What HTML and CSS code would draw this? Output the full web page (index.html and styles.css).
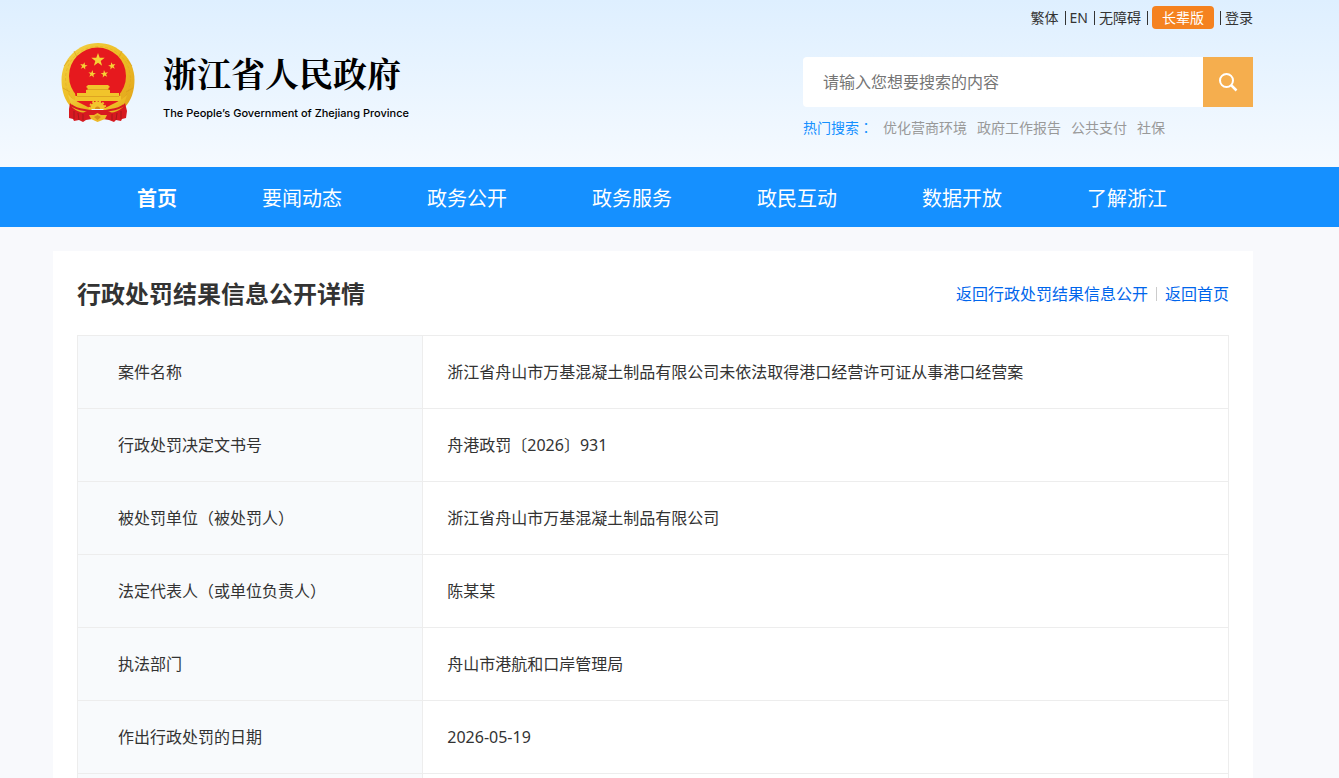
FILE: index.html
```html
<!DOCTYPE html>
<html lang="zh-CN">
<head>
<meta charset="utf-8">
<meta name="viewport" content="width=device-width, initial-scale=1">
<title>行政处罚结果信息公开详情</title>
<link rel="stylesheet" href="styles.css">
</head>
<body>
<header class="header">
  <div class="wrap">
    <div class="topbar">
      <a href="#">繁体</a><span class="bar"></span><a href="#">EN</a><span class="bar"></span><a href="#">无障碍</a><span class="bar"></span><a class="elder" href="#">长辈版</a><span class="bar"></span><a href="#">登录</a>
    </div>
    <div class="masthead">
      <a class="brand" href="#">
        <svg class="emblem" viewBox="0 0 74 80" aria-hidden="true">
          <defs>
            <linearGradient id="gold" x1="0" y1="0" x2="1" y2="1"><stop offset="0" stop-color="#f3d34a"/><stop offset=".5" stop-color="#edbd25"/><stop offset="1" stop-color="#e2a51c"/></linearGradient>
            <path id="star" d="M0-7 1.700-2.200 6.700-2.200 2.700.9 4.100 5.700 0 2.800-4.100 5.700-2.700.9-6.700-2.200-1.700-2.200Z"/>
          </defs>
          <path d="M37 0C57 0 73.500 16 73.500 37 73.500 48 70 58 64 64L10 64C4 58 .5 48 .5 37 .5 16 17 0 37 0Z" fill="url(#gold)"/>
          <circle cx="37" cy="36" r="32.500" fill="none" stroke="#d79a1c" stroke-width="1" stroke-dasharray="3 2" opacity=".35"/>
          <path d="M8 17 3 23M66 17 71 23M2 45 9 49M72 45 65 49M13 8 16 14M61 8 58 14" stroke="#d6991a" stroke-width="1" opacity=".6"/>
          <circle cx="36.500" cy="33" r="28.500" fill="#e6191e"/>
          <path d="M14 50H59L56 66H17Z" fill="#e6191e"/>
          <g fill="#f6d335"><use href="#star" x="37" y="17"/>
            <use href="#star" transform="translate(22.700 23) rotate(12) scale(.56)"/>
            <use href="#star" transform="translate(51 23) rotate(-12) scale(.56)"/>
            <use href="#star" transform="translate(31 31) rotate(8) scale(.56)"/>
            <use href="#star" transform="translate(43.500 31) rotate(-8) scale(.56)"/></g>
          <g fill="#f1c42b"><path d="M27 42H47L49 44 47.500 45V47H49V50H25V47H26.500V45L25 44Z"/><path d="M16 50H58V53H60V58H14V53H16Z"/></g>
          <path d="M25 46.500H49M16 53.500H58" stroke="#c57d16" stroke-width=".7" opacity=".6"/>
          <path d="M9 60 17 67 29 70H44L57 67 64 60 66 68 65 75 61 76 60 78 55 77 53 79 48 77 42 76H31L25 77 22 79 18 77 13 78 12 76 8 75 8 66Z" fill="#d71920"/>
          <path d="M13 68 13 76M17 70 18 77M22 71 22 77M60 68 60 76M56 70 55 77M51 71 51 77" stroke="#a5181b" stroke-width="1"/>
          <path d="M7 52C12 57 19 60 29 65L33 69C25 71 17 70 11 64Z" fill="url(#gold)"/>
          <path d="M66 52C61 57 54 60 44 65L40 69C48 71 56 70 62 64Z" fill="url(#gold)"/>
          <path d="M10 62C17 68 25 66 32 69M63 62C56 68 48 66 41 69" fill="none" stroke="#d71920" stroke-width="2"/>
          <path d="M30 66A6.500 6.500 0 0 1 43 66" fill="#f3c52e" stroke="#f3c52e" stroke-width="2"/>
          <path d="M28.500 66A8 8 0 0 1 44.500 66" fill="none" stroke="#f3c52e" stroke-width="2" stroke-dasharray="2 1.500"/>
          <path d="M34 66A2.500 2.500 0 0 1 39 66Z" fill="#d88c1c"/>
          <path d="M22 70C28 66 32 67 36.500 67 41 67 45 66 51 70L48 76H25Z" fill="#d71920"/>
          <path d="M28 72 33 72 36.500 70 40 72 46 72 44 76 36.500 79 30 76Z" fill="#edb928"/>
          <path d="M33 74 36.500 72 40 74 36.500 77Z" fill="#d88c1c"/>
        </svg>
        <span class="brand-text"><span class="brand-cn">浙江省人民政府</span><span class="brand-en" lang="en">The People’s Government of Zhejiang Province</span></span>
      </a>
      <div class="search">
        <form class="search-box">
          <input class="search-input" type="text" aria-label="搜索" placeholder="请输入您想要搜索的内容">
          <button class="search-btn" type="button" aria-label="搜索"><svg viewBox="0 0 20 20" width="20" height="20" fill="none" stroke="#fff" stroke-width="2"><circle cx="8.500" cy="8.500" r="6.500"/><path d="M13 13 18.500 18.500" stroke-width="2.500"/></svg></button>
        </form>
        <div class="hot"><span class="hot-label">热门搜索<span class="colon" lang="zh-TW">：</span></span><a href="#">优化营商环境</a><a href="#">政府工作报告</a><a href="#">公共支付</a><a href="#">社保</a></div>
      </div>
    </div>
  </div>
</header>
<nav class="nav">
  <div class="wrap nav-list">
    <a class="active" href="#">首页</a><a href="#">要闻动态</a><a href="#">政务公开</a><a href="#">政务服务</a><a href="#">政民互动</a><a href="#">数据开放</a><a href="#">了解浙江</a>
  </div>
</nav>
<main class="main">
  <section class="wrap card">
    <div class="card-head">
      <h1>行政处罚结果信息公开详情</h1>
      <div class="back"><a href="#">返回行政处罚结果信息公开</a><span class="divider"></span><a href="#">返回首页</a></div>
    </div>
    <table class="detail">
      <tbody>
        <tr><th scope="row">案件名称</th><td>浙江省舟山市万基混凝土制品有限公司未依法取得港口经营许可证从事港口经营案</td></tr>
        <tr><th scope="row">行政处罚决定文书号</th><td>舟港政罚〔2026〕931</td></tr>
        <tr><th scope="row">被处罚单位（被处罚人）</th><td>浙江省舟山市万基混凝土制品有限公司</td></tr>
        <tr><th scope="row">法定代表人（或单位负责人）</th><td>陈某某</td></tr>
        <tr><th scope="row">执法部门</th><td>舟山市港航和口岸管理局</td></tr>
        <tr><th scope="row">作出行政处罚的日期</th><td>2026-05-19</td></tr>
        <tr><th scope="row"></th><td></td></tr>
      </tbody>
    </table>
  </section>
</main>
</body>
</html>
```
FILE: styles.css
```css
* { box-sizing: border-box; }
html { overflow: hidden; height: 100%; }
body {
  margin: 0;
  height: 100%;
  overflow: hidden;
  background: #f8f9fc;
  color: #333;
  font: 16px/24px "Noto Sans", "Noto Sans CJK SC", sans-serif;
}
a { color: inherit; text-decoration: none; }
.header, .nav, .main { padding-right: 33px; }
.wrap { max-width: 1200px; margin: 0 auto; }
.header { background: linear-gradient(#deefff, #f5faff); }
.header .wrap { padding-bottom: 29px; }
.topbar {
  display: flex;
  justify-content: flex-end;
  align-items: center;
  gap: 4px;
  height: 35px;
  font-size: 14px;
  line-height: 23px;
}
.bar { width: 1px; height: 14px; margin-left: 2px; background: #333; }
.elder { padding: 0 10px; border-radius: 4px; background: #f58220; color: #fff; }
.masthead { display: flex; justify-content: space-between; align-items: flex-start; }
.brand { display: flex; gap: 28px; padding: 8px 0 0 8px; color: #000; }
.emblem { width: 74px; height: 80px; }
.brand-text { display: flex; flex-direction: column; gap: 8px; padding-top: 6px; }
.brand-cn {
  font: bold 34px/48px "Noto Serif CJK SC", "Noto Sans CJK SC", serif;
}
.brand-en { font: 500 11px/16px Inter, sans-serif; }
.search { width: 450px; padding-top: 22px; }
.search-box { display: flex; height: 50px; }
.search-input {
  flex: 1;
  min-width: 0;
  padding: 0 20px;
  border: 0;
  border-radius: 4px 0 0 4px;
  background: #fff;
  font: inherit;
}
.search-input::placeholder { color: #757575; opacity: 1; }
.search-btn {
  display: grid;
  place-items: center;
  width: 50px;
  padding: 0;
  border: 0;
  background: #f5ae4e;
}
.hot { display: flex; gap: 10px; padding-top: 10px; font-size: 14px; line-height: 21px; color: #999; }
.hot-label { color: #1590ff; }
.colon { font-family: "Noto Sans CJK TC", sans-serif; }
.nav { background: #1590ff; color: #fff; font-size: 20px; line-height: 56px; }
.nav-list { display: flex; gap: 85px; padding: 4px 0 0 84px; white-space: nowrap; }
.active { font-weight: bold; }
.main { padding-top: 24px; }
.card { padding: 24px; background: #fff; }
.card-head { display: flex; justify-content: space-between; align-items: center; height: 60px; padding-bottom: 22px; }
h1 { margin: 0; font-size: 24px; line-height: 38px; }
.back { display: flex; align-items: center; color: #0066ec; }
.divider { width: 1px; height: 14px; margin: 0 8px; background: #ccc; }
.detail { width: 100%; border-collapse: collapse; table-layout: fixed; }
.detail th, .detail td { height: 73px; padding: 0 24px; border: 1px solid #ededed; text-align: left; font-weight: 400; }
.detail th { width: 30%; padding-left: 40px; background: #f8fafc; }
```
